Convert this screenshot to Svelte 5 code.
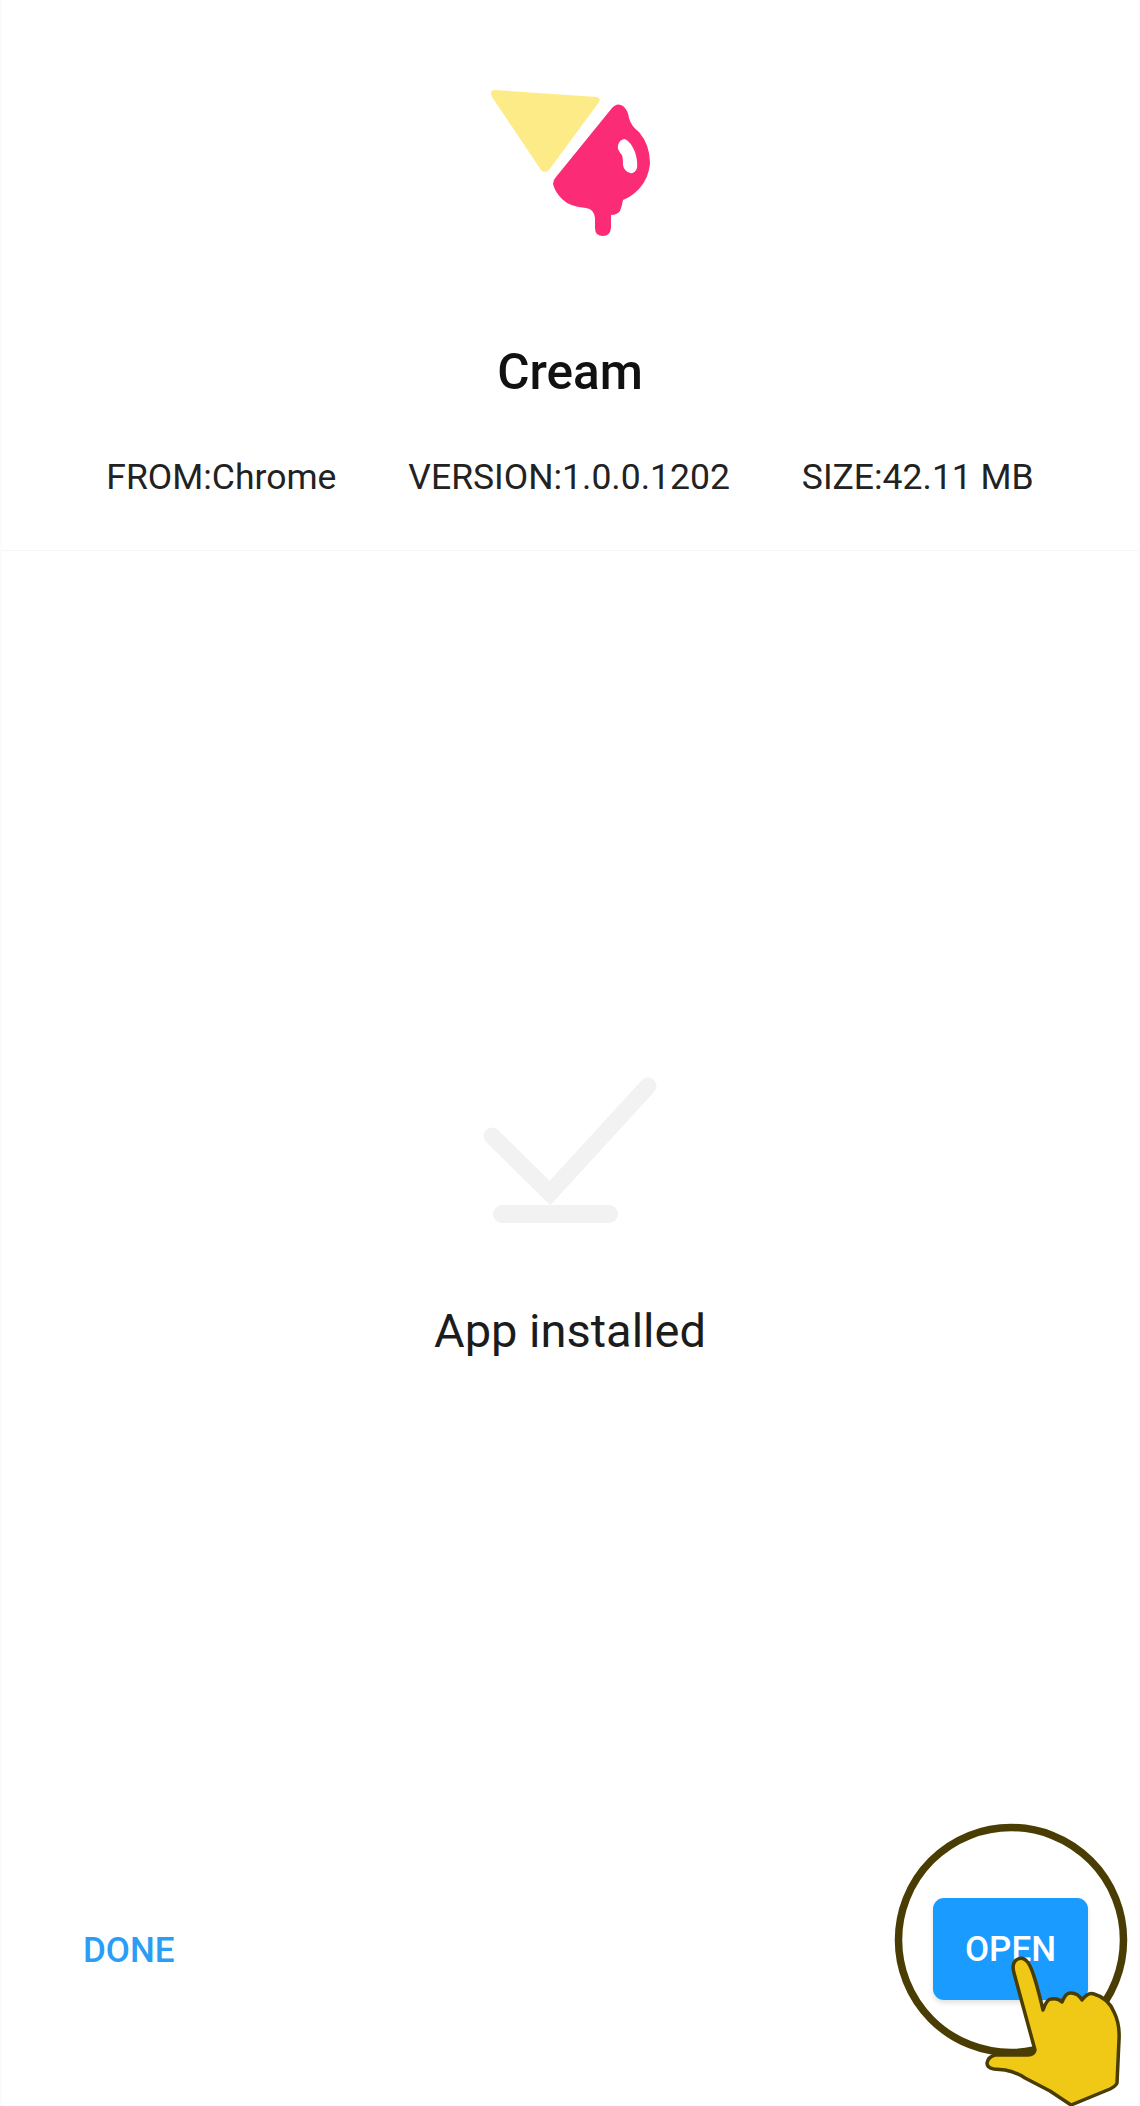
<script>
  const info = ["FROM:Chrome", "VERSION:1.0.0.1202", "SIZE:42.11 MB"];
</script>

<div class="screen">
  <header class="top">
    <svg class="logo" viewBox="480 85 180 160" width="180" height="160" aria-hidden="true">
      <path
        d="M495 90 L597 97 Q601 98 599 102 L549 170 Q545 174 541 170 L492 97 Q489 90 495 90 Z"
        fill="#fdeb87"
      />
      <path
        fill="#fb2c75"
        fill-rule="evenodd"
        d="M612 108 Q617 102 623 106 Q628 110 629 118 Q631 126 639 132 Q650 145 650 163 Q649 178 639 189 Q631 197 623 200 Q622 206 620 211 Q617 215 611 215 L611 228 Q610 236 603 236 Q595 236 595 228 L595 218 Q594 209 586 208 Q570 207 562 199 Q555 192 553 184 Q553 180 556 177 Z
           M618 145 Q620 139 625 139 Q631 142 635 152 Q638 162 637 168 Q635 174 630 173 Q624 171 623 165 Q623 158 622 155 Q617 150 618 145 Z"
      />
    </svg>
    <h1>Cream</h1>
    <div class="info">
      {#each info as item}
        <span>{item}</span>
      {/each}
    </div>
  </header>

  <main class="status">
    <svg class="check" viewBox="480 1075 180 150" width="180" height="150" aria-hidden="true">
      <path d="M492 1136 L550 1193 L648 1086" fill="none" stroke="#f2f2f2" stroke-width="17" stroke-linecap="round" />
      <rect x="493" y="1205" width="125" height="18" rx="9" fill="#f2f2f2" />
    </svg>
    <p>App installed</p>
  </main>

  <footer class="actions">
    <button class="done">DONE</button>
    <div class="open-wrap">
      <button class="open">OPEN</button>
      <svg class="pointer" viewBox="870 1800 270 306" width="270" height="306" aria-hidden="true">
        <circle cx="1011" cy="1940" r="112.5" fill="none" stroke="#4a3d04" stroke-width="7.5" />
        <path
          d="M1035 2050 L1014 1973 Q1011 1962 1018 1959 Q1025 1956 1030 1966 Q1035 1976 1043 2010 Q1047 1998 1052 1999 Q1058 1998 1062 2002 Q1066 1992 1071 1993 Q1078 1993 1082 2000 Q1088 1992 1094 1994 Q1108 1998 1114 2012 Q1120 2024 1119 2040 L1117 2083 Q1116 2086 1110 2089 L1071 2105 L1050 2091 L1025 2078 Q1016 2072 1005 2070 L994 2069 Q987 2068 987 2063 Q988 2057 995 2055 L1028 2055 Q1034 2055 1035 2050 Z"
          fill="#f0c917"
          stroke="#4a3d04"
          stroke-width="3.5"
          stroke-linejoin="round"
        />
      </svg>
    </div>
  </footer>
</div>

<style>
  :global(body) {
    margin: 0;
    background: #fff;
  }

  .screen {
    width: 1140px;
    height: 2106px;
    display: flex;
    flex-direction: column;
    box-sizing: border-box;
    overflow: hidden;
    background: #fff;
    color: #1c1c1c;
    font-family: Roboto, "Liberation Sans", sans-serif;
    border-left: 2px solid #fbfbfb;
    border-right: 2px solid #fbfbfb;
  }

  .top {
    height: 551px;
    box-sizing: border-box;
    padding-top: 85px;
    display: flex;
    flex-direction: column;
    align-items: center;
    border-bottom: 1px solid #f5f5f5;
  }

  .logo,
  .check {
    display: block;
  }

  h1 {
    margin: 99px 0 0;
    font-size: 49.5px;
    line-height: 56px;
    font-weight: 500;
    color: #111;
  }

  .info {
    margin-top: 57px;
    display: flex;
    justify-content: center;
    gap: 72px;
    font-size: 35.5px;
    line-height: 40px;
    color: #222;
  }

  .status {
    flex: 1;
    padding-top: 524px;
    display: flex;
    flex-direction: column;
    align-items: center;
  }

  .status p {
    margin: 80px 0 0;
    font-size: 47px;
    line-height: 52px;
    color: #1c1c1c;
  }

  .actions {
    height: 208px;
    box-sizing: border-box;
    padding: 0 50px 0 81px;
    display: flex;
    align-items: flex-start;
    justify-content: space-between;
  }

  button {
    border: none;
    padding: 0;
    font-family: inherit;
    font-weight: 500;
    font-size: 35px;
    cursor: pointer;
  }

  .done {
    margin-top: 32px;
    height: 40px;
    background: none;
    color: #2a9df4;
  }

  .open-wrap {
    position: relative;
  }

  .open {
    width: 155px;
    height: 102px;
    border-radius: 11px;
    background: #1a9bff;
    color: #fff;
    box-shadow: 0 3px 5px rgba(0, 0, 0, 0.12);
  }

  /* overlay covers the bottom right corner of the screenshot */
  .pointer {
    position: absolute;
    left: -63px;
    top: -98px;
    pointer-events: none;
  }
</style>
